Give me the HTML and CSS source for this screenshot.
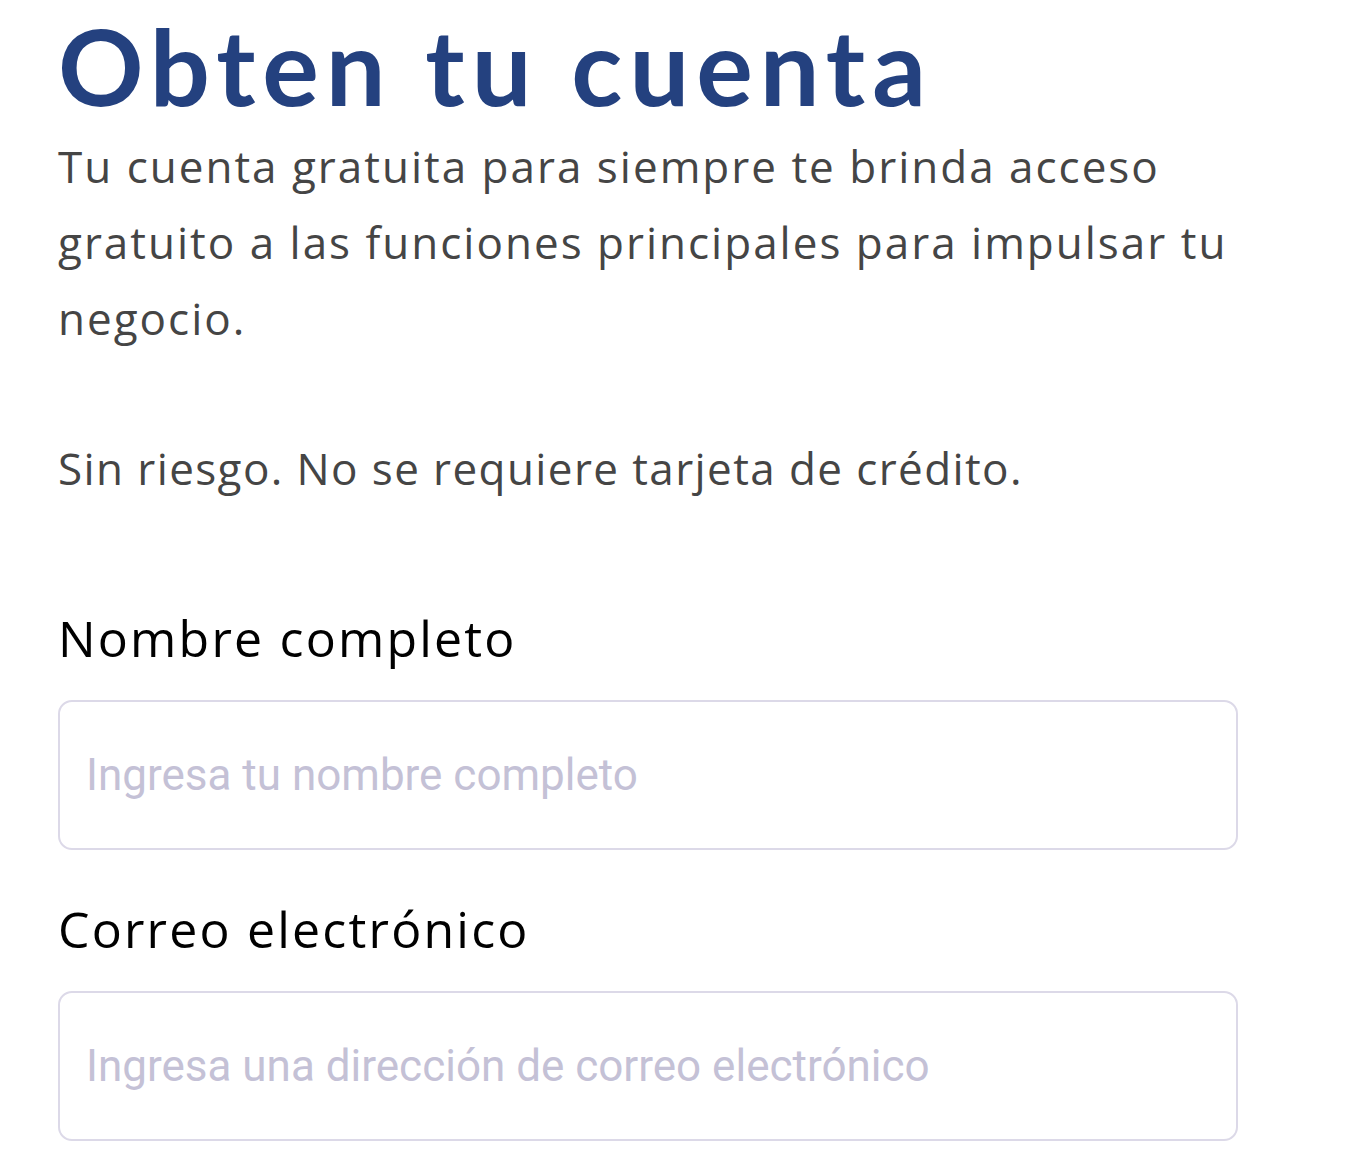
FILE: index.html
```html
<!DOCTYPE html>
<html lang="es">
<head>
  <meta charset="UTF-8">
  <title>Obten tu cuenta</title>
  <link rel="stylesheet" href="styles.css">
</head>
<body>
  <main class="signup">
    <h1 class="signup-title">Obten tu cuenta</h1>
    <p class="signup-text">Tu cuenta gratuita para siempre te brinda acceso<br>gratuito a las funciones principales para impulsar tu<br>negocio.</p>
    <p class="signup-text signup-note">Sin riesgo. No se requiere tarjeta de crédito.</p>

    <form class="signup-form">
      <label class="field">
        <span class="field-label">Nombre completo</span>
        <input class="field-input" type="text" name="fullName" placeholder="Ingresa tu nombre completo">
      </label>
      <label class="field">
        <span class="field-label">Correo electrónico</span>
        <input class="field-input" type="email" name="email" placeholder="Ingresa una dirección de correo electrónico">
      </label>
    </form>
  </main>
</body>
</html>
```

FILE: styles.css
```css
body {
  margin: 0;
  background: #fff;
  font-family: "Open Sans", "DejaVu Sans", sans-serif;
}
.signup {
  width: 1180px;
  padding: 0 0 0 58px;
}
.signup-title {
  margin: 9px 0 0;
  font-family: Lato, "Open Sans", sans-serif;
  font-size: 106px;
  line-height: 112px;
  font-weight: 700;
  letter-spacing: 7px;
  color: #24417f;
}
.signup-text {
  margin: 7px 0 0;
  font-size: 44px;
  line-height: 76px;
  letter-spacing: 2px;
  color: #454545;
}
.signup-note {
  margin-top: 74px;
  letter-spacing: 1.4px;
}

.signup-form {
  display: flex;
  flex-direction: column;
  gap: 51px;
  margin-top: 104px;
}
.field {
  display: flex;
  flex-direction: column;
  gap: 34px;
}
.field-label {
  font-size: 50px;
  line-height: 56px;
  font-weight: 500;
  letter-spacing: 2.2px;
  color: #000;
}
.field-input {
  box-sizing: border-box;
  width: 100%;
  height: 150px;
  padding: 0 26px;
  border: 2px solid #dcd9e8;
  border-radius: 14px;
  font-family: Roboto, sans-serif;
  font-size: 44px;
  color: #333;
  outline: none;
}
.field-input::placeholder { color: #c4c1d6; }
```
